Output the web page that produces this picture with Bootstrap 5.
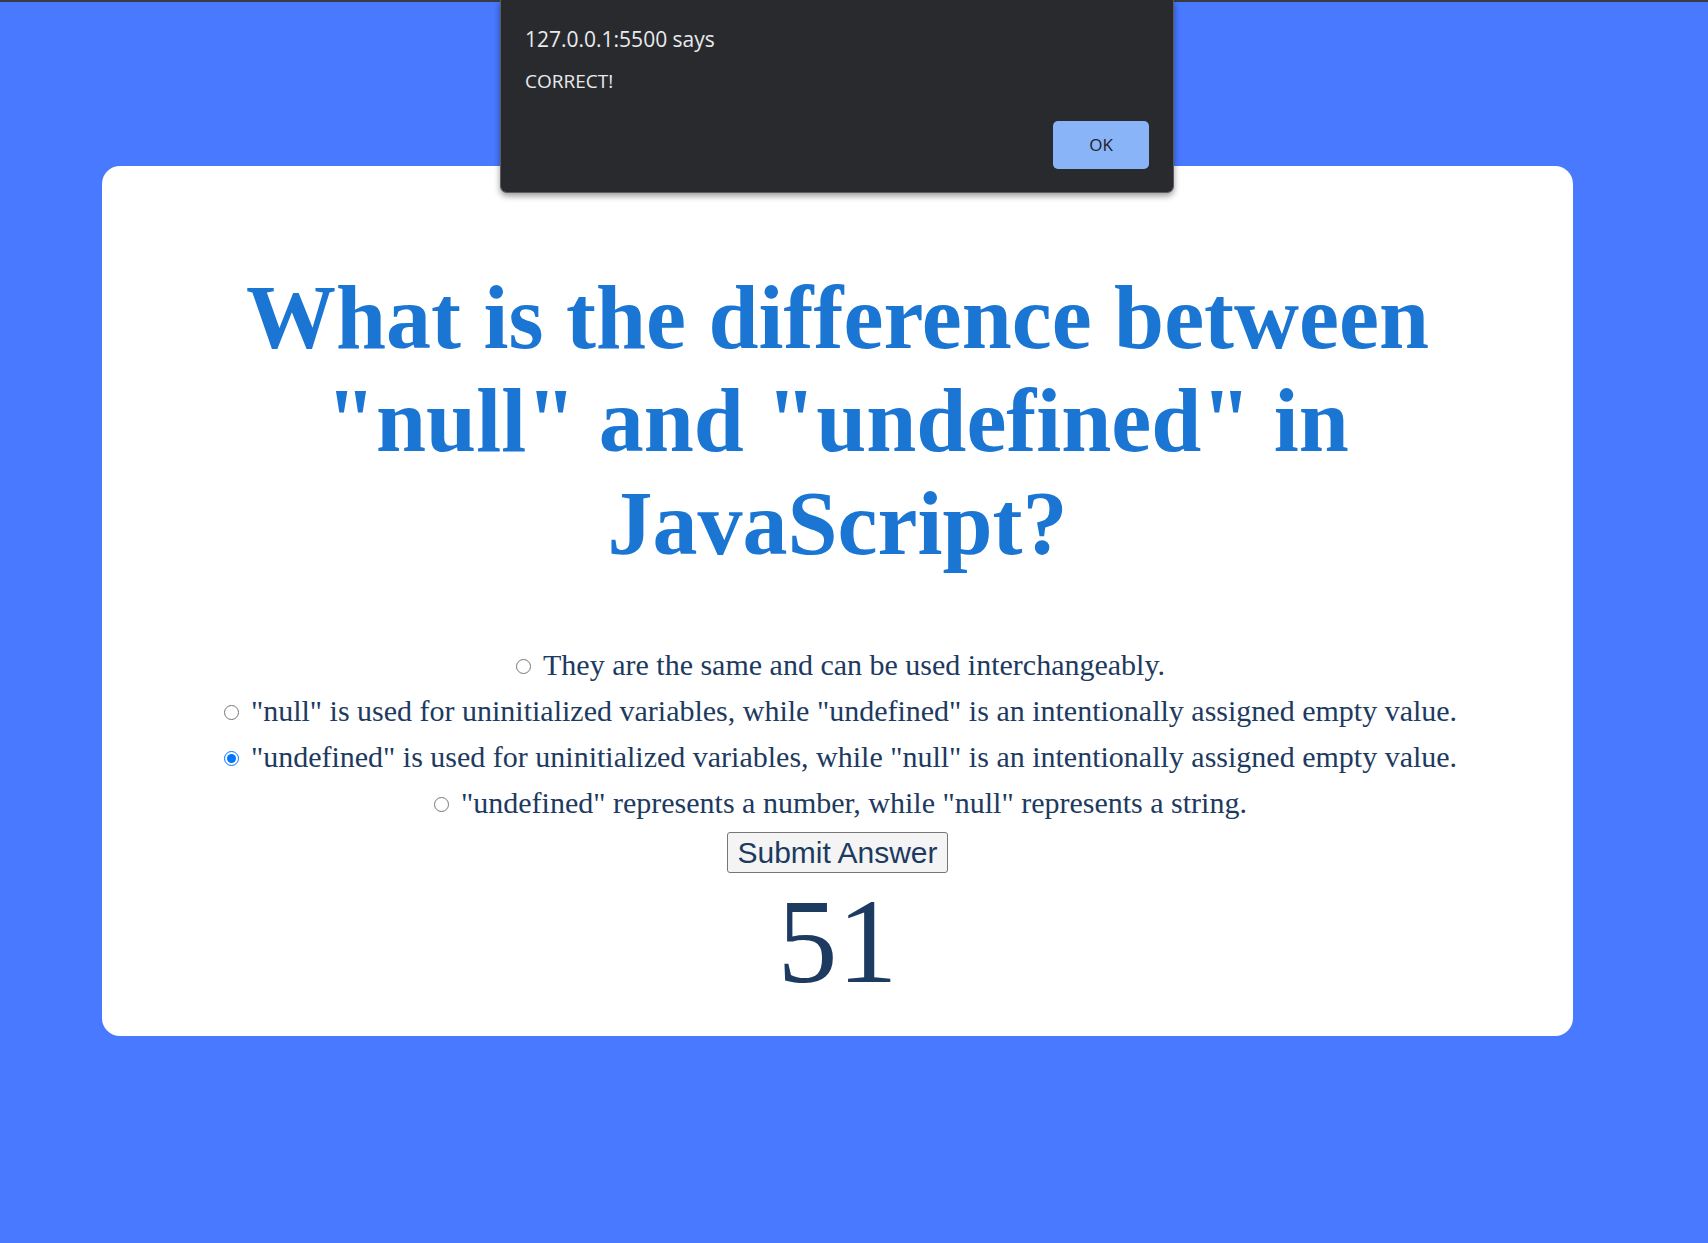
<!DOCTYPE html>
<html lang="en">
<head>
<meta charset="utf-8">
<meta name="viewport" content="width=device-width, initial-scale=1">
<title>JavaScript Quiz</title>
<link href="https://cdn.jsdelivr.net/npm/bootstrap@5.3.0/dist/css/bootstrap.min.css" rel="stylesheet">
<style>
  body { background: #4879ff; color: #1d3a60; font-family: "Liberation Serif", "Times New Roman", serif; font-size: 30px; }
  .quiz-page { border-top: 2px solid #3a3b40; padding: 164px 135px 48px 102px; }
  .quiz-panel { border-radius: 18px; padding: 100px 100px 25px; }
  .question { color: #1b76d3; font-size: 90px; line-height: 103px; margin-bottom: 67px; }
  .choice { line-height: 46px; gap: 12px; padding-left: 6px; }
  .choice input { width: 15px; height: 15px; margin: 3px 0 0; accent-color: #0075ff; flex: none; }
  .submit-answer { font-family: "Liberation Sans", Arial, sans-serif; color: #1d3a60; background: #f4f4f4; border: 1px solid #767676; border-radius: 3px; padding: 1px 9px; line-height: 37px; margin-top: 6px; }
  .timer { font-size: 120px; line-height: 138px; }
  .alert-box { width: 674px; max-width: 100%; height: 193px; background: #292a2d; color: #e8eaed; font-family: "Open Sans", "Segoe UI", sans-serif; border: 1px solid #5c5d60; border-top: 0; border-radius: 0 0 7px 7px; box-shadow: 0 3px 6px rgba(0,0,0,.4); padding: 24px 24px 23px; left: calc(50% - 17px); }
  .alert-origin { font-size: 21px; line-height: 30px; }
  .alert-text { font-size: 19px; line-height: 26px; margin-top: 14px; }
  .alert-ok { width: 96px; height: 48px; border: 0; border-radius: 5px; background: #8ab4f8; color: #202124; font-size: 17px; font-weight: 500; }
</style>
<script src="https://cdn.jsdelivr.net/npm/bootstrap@5.3.0/dist/js/bootstrap.bundle.min.js"></script>
</head>
<body>
<main class="quiz-page min-vh-100">
  <form class="quiz-panel bg-white text-center d-flex flex-column align-items-center">
    <h1 class="question fw-bold">What is the difference between "null" and "undefined" in JavaScript?</h1>
    <label class="choice d-flex align-items-center"><input type="radio" name="answer"><span>They are the same and can be used interchangeably.</span></label>
    <label class="choice d-flex align-items-center"><input type="radio" name="answer"><span>"null" is used for uninitialized variables, while "undefined" is an intentionally assigned empty value.</span></label>
    <label class="choice d-flex align-items-center"><input type="radio" name="answer" checked><span>"undefined" is used for uninitialized variables, while "null" is an intentionally assigned empty value.</span></label>
    <label class="choice d-flex align-items-center"><input type="radio" name="answer"><span>"undefined" represents a number, while "null" represents a string.</span></label>
    <button type="button" class="submit-answer">Submit Answer</button>
    <div class="timer">51</div>
  </form>
</main>
<div class="alert-box position-absolute top-0 translate-middle-x d-flex flex-column" role="alertdialog" aria-labelledby="origin" aria-describedby="message">
  <div id="origin" class="alert-origin">127.0.0.1:5500 says</div>
  <div id="message" class="alert-text">CORRECT!</div>
  <button type="button" class="alert-ok align-self-end mt-auto">OK</button>
</div>
</body>
</html>
